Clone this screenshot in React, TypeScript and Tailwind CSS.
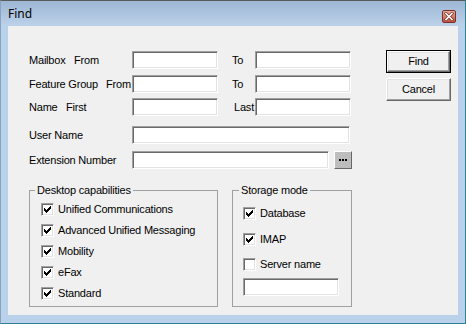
import React from "react";

const edit =
  "bg-white border border-t-[#a0a0a0] border-l-[#a0a0a0] border-r-white border-b-white shadow-[inset_1px_1px_0_#696969,inset_-1px_-1px_0_#e3e3e3]";
const raised =
  "bg-[#f0f0f0] border border-t-white border-l-white border-r-[#696969] border-b-[#696969] shadow-[inset_-1px_-1px_0_#a0a0a0,inset_1px_1px_0_#e3e3e3]";

function Check({ checked }: { checked: boolean }) {
  return (
    <div className={`w-[13px] h-[13px] shrink-0 flex items-center justify-center ${edit}`}>
      {checked && (
        <svg width="7" height="7" viewBox="0 0 7 7" shapeRendering="crispEdges">
          <path
            d="M6 0h1v1h-1z M5 1h2v1h-2z M0 2h1v1h-1z M4 2h3v1h-3z M0 3h2v1h-2z M3 3h3v1h-3z M0 4h5v1h-5z M1 5h3v1h-3z M2 6h1v1h-1z"
            fill="#000"
          />
        </svg>
      )}
    </div>
  );
}

function CheckRow({ label, checked, h }: { label: string; checked: boolean; h: string }) {
  return (
    <div className={`${h} flex items-center gap-[4px] whitespace-nowrap`}>
      <Check checked={checked} />
      <span>{label}</span>
    </div>
  );
}

export default function App() {
  return (
    <div className="w-[466px] h-[324px] flex flex-col bg-[#b9d1ea] border border-t-[#5a5a5a] border-l-[#8aa4bf] border-r-[#2f8095] border-b-[#2f8095] font-['Liberation_Sans',Arial,sans-serif] text-[11px] tracking-[-0.2px] text-black overflow-hidden">
      {/* title bar */}
      <div className="h-[25px] shrink-0 flex justify-between bg-linear-to-b from-[#9cb6d4] to-[#bcd2ea]">
        <span className="pl-[7px] pt-[5px] leading-[16px] text-[12px] tracking-normal font-['Noto_Sans',sans-serif]">
          Find
        </span>
        <div className="mt-[9px] mr-[9px] w-[14px] h-[13px] rounded-[2px] border border-[#7a3026] bg-linear-to-b from-[#e9ab9c] to-[#c4503d] flex items-center justify-center">
          <svg width="10" height="9" viewBox="0 0 10 9">
            <path d="M2 1.5L8 7.5M8 1.5L2 7.5" stroke="#6b2a20" strokeWidth="3" strokeLinecap="square" />
            <path d="M2 1.5L8 7.5M8 1.5L2 7.5" stroke="#ffffff" strokeWidth="1.6" strokeLinecap="square" />
          </svg>
        </div>
      </div>

      {/* client area */}
      <div className="mx-[7px] h-[289px] shrink-0 bg-[#f0f0f0] flex pl-[21px] pt-[24px]">
        <div className="w-[323px] flex flex-col">
          {/* Mailbox */}
          <div className="mt-[1px] h-[18px] flex items-center whitespace-nowrap">
            <div className="w-[103px] flex">
              <span className="w-[45px]">Mailbox</span>
              <span>From</span>
            </div>
            <div className={`w-[86px] h-[18px] ${edit}`} />
            <div className="w-[37px]">
              <span className="ml-[14px]">To</span>
            </div>
            <div className={`w-[96px] h-[18px] ${edit}`} />
          </div>
          {/* Feature group */}
          <div className="mt-[6px] h-[18px] flex items-center whitespace-nowrap">
            <div className="w-[103px] flex">
              <span className="w-[77px]">Feature Group</span>
              <span>From</span>
            </div>
            <div className={`w-[86px] h-[18px] ${edit}`} />
            <div className="w-[37px]">
              <span className="ml-[14px]">To</span>
            </div>
            <div className={`w-[96px] h-[18px] ${edit}`} />
          </div>
          {/* Name */}
          <div className="mt-[5px] h-[18px] flex items-center whitespace-nowrap">
            <div className="w-[103px] flex">
              <span className="w-[37px]">Name</span>
              <span>First</span>
            </div>
            <div className={`w-[86px] h-[18px] ${edit}`} />
            <div className="w-[37px]">
              <span className="ml-[16px]">Last</span>
            </div>
            <div className={`w-[96px] h-[18px] ${edit}`} />
          </div>
          {/* User name */}
          <div className="mt-[10px] h-[18px] flex items-center whitespace-nowrap">
            <div className="w-[103px]">User Name</div>
            <div className={`w-[218px] h-[18px] ${edit}`} />
          </div>
          {/* Extension number */}
          <div className="mt-[7px] h-[18px] flex items-center whitespace-nowrap">
            <div className="w-[103px]">Extension Number</div>
            <div className={`w-[197px] h-[18px] ${edit}`} />
            <div className="ml-[5px] w-[18px] h-[18px] -mt-[1px] flex items-center justify-center gap-[1px] bg-[#bdbdbd] border border-t-white border-l-white border-r-[#696969] border-b-[#696969]">
              <div className="w-[2px] h-[2px] bg-black" />
              <div className="w-[2px] h-[2px] bg-black" />
              <div className="w-[2px] h-[2px] bg-black" />
            </div>
          </div>

          {/* group boxes */}
          <div className="mt-[15px] flex gap-[14px]">
            <fieldset className="w-[189px] h-[123px] min-w-0 m-0 p-0 border border-[#a0a0a0]">
              <legend className="ml-[5px] px-[2px] leading-[13px] whitespace-nowrap">Desktop capabilities</legend>
              <div className="pl-[11px] pt-[2px] flex flex-col">
                <CheckRow h="h-[21px]" label="Unified Communications" checked />
                <CheckRow h="h-[21px]" label="Advanced Unified Messaging" checked />
                <CheckRow h="h-[21px]" label="Mobility" checked />
                <CheckRow h="h-[21px]" label="eFax" checked />
                <CheckRow h="h-[21px]" label="Standard" checked />
              </div>
            </fieldset>
            <fieldset className="w-[120px] h-[123px] min-w-0 m-0 p-0 border border-[#a0a0a0]">
              <legend className="ml-[6px] px-[2px] leading-[13px] whitespace-nowrap">Storage mode</legend>
              <div className="pl-[10px] pt-[4px] flex flex-col">
                <CheckRow h="h-[25px]" label="Database" checked />
                <CheckRow h="h-[26px]" label="IMAP" checked />
                <CheckRow h="h-[25px]" label="Server name" checked={false} />
                <div className={`mt-[1px] w-[96px] h-[18px] ${edit}`} />
              </div>
            </fieldset>
          </div>
        </div>

        {/* buttons */}
        <div className="ml-[34px] flex flex-col gap-[5px]">
          <div className="w-[65px] h-[23px] border border-black">
            <div className={`w-full h-full flex items-center justify-center ${raised}`}>Find</div>
          </div>
          <div className={`w-[65px] h-[23px] flex items-center justify-center ${raised}`}>Cancel</div>
        </div>
      </div>
    </div>
  );
}
